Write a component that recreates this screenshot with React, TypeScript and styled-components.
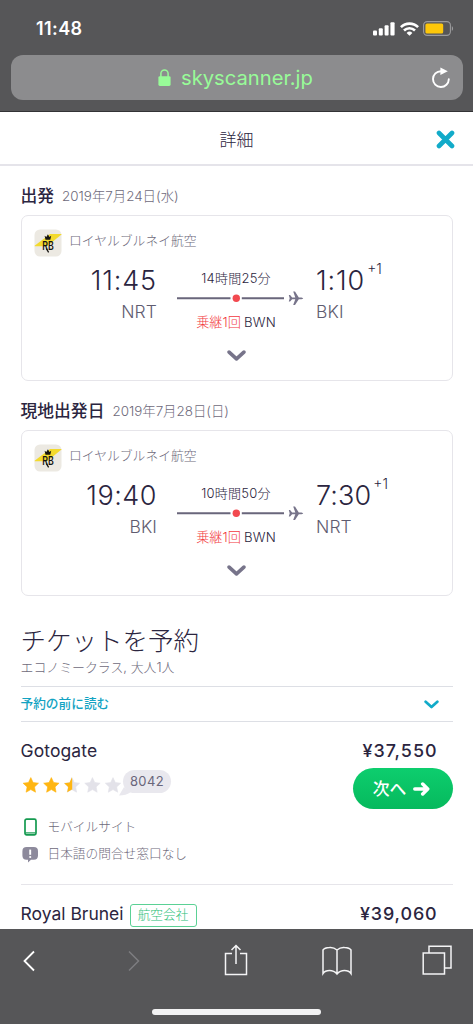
import React from "react";
import styled, { createGlobalStyle } from "styled-components";

const Global = createGlobalStyle`
  * { box-sizing: border-box; }
  html, body { margin: 0; padding: 0; background: #fff; }
  body { font-family: Inter, "Noto Sans CJK JP", sans-serif; color: #2b2540; }
`;

const Screen = styled.div`
  width: 473px;
  height: 1024px;
  overflow: hidden;
  display: flex;
  flex-direction: column;
  background: #fff;
`;

const Label = styled.span<{ $size: number; $weight?: number; $color?: string; $track?: number }>`
  font-size: ${(p) => p.$size}px;
  font-weight: ${(p) => p.$weight ?? 400};
  color: ${(p) => p.$color ?? "#2b2540"};
  letter-spacing: ${(p) => p.$track ?? 0}px;
  line-height: 1;
  white-space: nowrap;
`;

const BrowserHeader = styled.header`
  flex: none;
  height: 112px;
  background: #565658;
  border-bottom: 1px solid #333335;
`;

const StatusBar = styled.div`
  height: 55px;
  padding: 2px 19px 0 36px;
  display: flex;
  align-items: center;
  justify-content: space-between;
`;

const StatusIcons = styled.div`
  display: flex;
  align-items: center;
  gap: 4.5px;
`;

const AddressBar = styled.div`
  height: 45px;
  margin: 0 10.5px 0 11px;
  padding: 0 12px 0 147px;
  border-radius: 12px;
  background: #8c8c8e;
  display: flex;
  align-items: center;
`;

const Host = styled.div`
  flex: 1;
  padding: 2px 0 0 10px;
  display: flex;
`;

const TitleBar = styled.div`
  flex: none;
  height: 54px;
  padding: 0 18px 0 219.5px;
  border-bottom: 2px solid #e5e4ea;
  display: flex;
  align-items: center;
  justify-content: space-between;
  & > span { padding-top: 5px; }
  & > svg { margin-top: 2px; }
`;

const Content = styled.main`
  flex: none;
  height: 763px;
  overflow: hidden;
  padding: 0 20.5px;
`;

const LegHeading = styled.div`
  height: 49px;
  padding-top: 11px;
  display: flex;
  align-items: center;
  gap: 8px;
  & > span + span { padding-top: 1px; }
`;

const Card = styled.section`
  height: 166px;
  border: 1.5px solid #e6e5ea;
  border-radius: 7px;
  padding: 12.5px;
`;

const Airline = styled.div`
  height: 28px;
  display: flex;
  align-items: center;
  gap: 7px;
  & > span { margin-top: -3px; }
`;

const Route = styled.div`
  display: grid;
  grid-template-columns: 122px 21px 118px 21px 1fr;
  height: 70px;
`;

const Stop = styled.div<{ $align: "start" | "end" }>`
  grid-column: ${(p) => (p.$align === "end" ? 1 : 5)};
  padding-top: 10px;
  display: flex;
  flex-direction: column;
  align-items: flex-${(p) => p.$align};
  gap: 8.5px;
  ${(p) => p.$align === "end" && "margin-right: -1px;"}
`;

const Clock = styled.div`
  height: 28px;
  display: flex;
  align-items: flex-start;
  gap: 2px;
  & > span + span { margin-top: -5px; }
`;

const Middle = styled.div`
  grid-column: 3;
  padding-top: 15px;
  display: flex;
  flex-direction: column;
  align-items: center;
`;

const Transfer = styled.div`
  display: flex;
  gap: 3px;
  align-items: center;
`;

const Track = styled.svg`
  margin: 4px 0 9px 7px;
  display: block;
  flex: none;
`;

const Expand = styled.div`
  display: flex;
  justify-content: center;
  padding-top: 23.5px;
`;

const Booking = styled.div`
  height: 90px;
  padding-top: 32px;
  display: flex;
  flex-direction: column;
  gap: 8px;
`;

const ReadFirst = styled.div`
  height: 36px;
  border-top: 1px solid #dddfe5;
  border-bottom: 1px solid #dddfe5;
  padding: 1px 14px 0 0;
  display: flex;
  align-items: center;
  justify-content: space-between;
`;

const Offer = styled.article`
  height: 163px;
  padding-top: 15.5px;
  border-bottom: 1.5px solid #e6e5ea;
  display: flex;
  justify-content: space-between;
`;

const OfferInfo = styled.div`
  display: flex;
  flex-direction: column;
`;

const Rating = styled.div`
  display: flex;
  height: 41px;
  padding: 6.5px 0 0 1.5px;
`;

const Stars = styled.svg`
  margin-top: 8px;
  flex: none;
`;

const Reviews = styled.div`
  position: relative;
  width: 48px;
  height: 23px;
  border-radius: 12px;
  background: #e9e8ee;
  margin: 1px 0 0 0;
  display: flex;
  align-items: center;
  justify-content: center;
`;

const Tail = styled.svg`
  position: absolute;
  left: -4px;
  bottom: -3px;
`;

const Feature = styled.div`
  height: 27.5px;
  display: flex;
  align-items: center;
  gap: 8.5px;
  padding-left: 1px;
  & > svg { margin-left: -0.5px; }
`;

const Features = styled.div`
  padding-top: 10px;
`;

const PriceSide = styled.div`
  display: flex;
  flex-direction: column;
  align-items: flex-end;
  gap: 5.5px;
`;

const Price = styled(Label)`
  margin-right: 15px;
  height: 25px;
  line-height: 25px;
`;

const OfferName = styled(Label)`
  height: 25px;
  line-height: 25px;
`;

const Next = styled.button`
  width: 100px;
  height: 41px;
  border: 0;
  border-radius: 21px;
  padding: 0 2px 0 0;
  background: linear-gradient(#0dce6e, #06b95d);
  font-family: inherit;
  display: flex;
  align-items: center;
  justify-content: center;
  gap: 7px;
  & > span { padding-top: 2px; }
`;

const NextOffer = styled.div`
  height: 60px;
  padding-top: 15.5px;
  display: flex;
  justify-content: space-between;
`;

const Named = styled.div`
  display: flex;
  gap: 6px;
`;

const Badge = styled.div`
  width: 67px;
  height: 23px;
  margin-top: 3.5px;
  border: 1.5px solid #5bd195;
  border-radius: 3px;
  display: flex;
  align-items: center;
  justify-content: center;
`;

const Toolbar = styled.footer`
  flex: none;
  height: 95px;
  background: #565658;
  display: flex;
  flex-direction: column;
  align-items: center;
  justify-content: space-between;
  padding-bottom: 9px;
`;

const Tools = styled.div`
  width: 100%;
  height: 61px;
  padding: 3px 0 0 14px;
  display: grid;
  grid-template-columns: 105px 102px 100.5px 100px 30px;
  align-items: center;
`;

const Tool = styled.div<{ $lift?: boolean }>`
  width: 30px;
  display: flex;
  justify-content: center;
  ${(p) => p.$lift && "margin-top: -2px;"}
`;

const HomeIndicator = styled.div`
  width: 169px;
  height: 6px;
  border-radius: 3px;
  background: #f2f2f3;
`;

const Signal = () => (
  <svg width="22" height="14" viewBox="0 0 22 14" fill="#fff">
    <rect x="0" y="8.5" width="4" height="5" rx="1" />
    <rect x="5.8" y="6.3" width="4" height="7.2" rx="1" />
    <rect x="11.6" y="3.3" width="4" height="10.2" rx="1" />
    <rect x="17.4" y="0.2" width="4.2" height="13.3" rx="1" />
  </svg>
);

const Wifi = () => (
  <svg width="19" height="14" viewBox="0 0 19 14" fill="none" stroke="#fff" strokeWidth="2.6">
    <path d="M0.9 5.2a12.2 12.2 0 0 1 17.2 0" />
    <path d="M4 8.5a7.8 7.8 0 0 1 11 0" />
    <path d="M9.5 13.8L6.6 10.9a4.2 4.2 0 0 1 5.8 0z" fill="#fff" stroke="none" />
  </svg>
);

const Battery = () => (
  <svg width="31" height="15" viewBox="0 0 31 15">
    <rect x="0.6" y="0.6" width="26.8" height="13.8" rx="3.6" fill="none" stroke="#9b9b9d" strokeWidth="1.1" />
    <rect x="2.4" y="2.4" width="17.8" height="10.2" rx="1.6" fill="#fdc70a" />
    <path d="M28.8 5.2c1.7.6 1.7 4 0 4.6z" fill="#9b9b9d" />
  </svg>
);

const Lock = () => (
  <svg width="13" height="18" viewBox="0 0 13 18">
    <rect x="0.4" y="7.2" width="12.2" height="9.8" rx="1.4" fill="#98fb98" />
    <path d="M2.9 8V4.6a3.6 3.6 0 0 1 7.2 0V8" fill="none" stroke="#98fb98" strokeWidth="1.5" />
  </svg>
);

const Reload = () => (
  <svg width="20" height="22" viewBox="0 0 20 22">
    <path d="M17.8 12.2A7.9 7.9 0 1 1 10 4.2" fill="none" stroke="#fff" strokeWidth="1.9" strokeLinecap="round" />
    <path d="M9.4 0.4L16.8 4.2L9.4 8z" fill="#fff" />
  </svg>
);

const Close = () => (
  <svg width="19" height="19" viewBox="0 0 19 19">
    <path d="M3 3L16 16M16 3L3 16" stroke="#12abc9" strokeWidth="4.6" strokeLinecap="round" />
  </svg>
);

const AirlineLogo = () => (
  <svg width="28" height="28" viewBox="0 0 28 28">
    <rect x="0.5" y="0.5" width="27" height="27" rx="5.5" fill="#ece9e2" />
    <path d="M16 5H27.5V5.6L13 17.2H0.6V16.8z" fill="#f3da2d" />
    <path d="M10.6 6.8l1.8 1.2 1.5-2.7 1.5 2.7 1.8-1.2-.9 4h-4.8z" fill="#161411" />
    <text x="8.3" y="21" fontFamily="Inter, sans-serif" fontSize="11.5" fontWeight="600" textLength="11.5" lengthAdjust="spacingAndGlyphs" fill="#161411">RB</text>
    <path d="M12.3 19.5L14.6 23.3" stroke="#161411" strokeWidth="1.3" />
  </svg>
);

const Chevron = ({ w, color, stroke }: { w: number; color: string; stroke: number }) => (
  <svg width={w} height={w * 0.6} viewBox="0 0 20 12">
    <path d="M2.2 2.2L10 9.4L17.8 2.2" fill="none" stroke={color} strokeWidth={stroke} strokeLinecap="round" strokeLinejoin="round" />
  </svg>
);

const FlightTrack = () => (
  <Track width="128" height="18" viewBox="0 0 128 18">
    <path d="M1 9.3H54.5M65.800 9.3H108" stroke="#69667b" strokeWidth="1.9" />
    <circle cx="60.3" cy="9.3" r="3.7" fill="#f2494f" />
    <path transform="translate(0 .3)" d="M112.8 5.8h1.300l2 2.300h3.200L117.200 2.300h1.800l3.800 5.800h2.700q1.700.3 1.700.9t-1.700.9h-2.700l-3.800 5.800h-1.800l2.100-5.800h-3.200l-2 2.300h-1.300l.9-3.200z" fill="#77748a" />
  </Track>
);

const STAR = "M8 .6l2.3 4.9 5.4.7-4 3.7 1 5.3L8 12.6l-4.7 2.6 1-5.3-4-3.7 5.4-.7z";

const StarRow = () => (
  <Stars width="101" height="16" viewBox="0 0 101 16">
    <defs>
      <clipPath id="half"><rect width="8.3" height="16" /></clipPath>
    </defs>
    {[0, 1, 2, 3, 4].map((i) => (
      <g key={i} transform={`translate(${i * 20.55 + 0.8} 0)`}>
        <path d={STAR} fill={i < 2 ? "#ffb612" : "#e3e2e9"} stroke={i < 2 ? "#ffb612" : "#e3e2e9"} strokeWidth="0.6" strokeLinejoin="round" />
        {i === 2 && <path d={STAR} fill="#ffb612" clipPath="url(#half)" />}
      </g>
    ))}
  </Stars>
);

const Phone = () => (
  <svg width="18" height="18" viewBox="0 0 18 18">
    <rect x="4" y="1.2" width="11" height="15.6" rx="1.6" fill="none" stroke="#159a50" strokeWidth="1.7" />
    <path d="M4.5 14.9H14.5" stroke="#159a50" strokeWidth="1.2" />
  </svg>
);

const Notice = () => (
  <svg width="18" height="18" viewBox="0 0 18 18">
    <path d="M5.6 1h7.2Q17 1 17 5.2v4.4q0 4.2-4.2 4.2H10l-3 2.6v-2.6H5.6Q1.4 13.8 1.4 9.6V5.2Q1.4 1 5.6 1z" fill="#8d8a9c" />
    <path d="M9.2 3.6V8.8" stroke="#fff" strokeWidth="1.9" />
    <circle cx="9.2" cy="11" r="1.1" fill="#fff" />
  </svg>
);

const Arrow = () => (
  <svg width="17" height="14" viewBox="0 0 17 14" fill="none" stroke="#fff" strokeWidth="3.5" strokeLinecap="round" strokeLinejoin="round">
    <path d="M1.8 7H14M9.7 2L14.7 7L9.7 12" />
  </svg>
);

interface Leg {
  heading: string;
  date: string;
  from: string;
  to: string;
  depart: string;
  arrive: string;
  duration: string;
}

const LEGS: Leg[] = [
  { heading: "出発", date: "2019年7月24日(水)", from: "NRT", to: "BKI", depart: "11:45", arrive: "1:10", duration: "14時間25分" },
  { heading: "現地出発日", date: "2019年7月28日(日)", from: "BKI", to: "NRT", depart: "19:40", arrive: "7:30", duration: "10時間50分" },
];

// The digit 1 is narrow in Inter, so times with several of them are spaced a little wider.
const timeTrack = (time: string) => 0.1 + 0.4 * (time.split("1").length - 1);

const FlightLeg = ({ leg }: { leg: Leg }) => (
  <>
    <LegHeading>
      <Label $size={16.8} $weight={500}>{leg.heading}</Label>
      <Label $size={13.4} $weight={300} $color="#6e6a7b">{leg.date}</Label>
    </LegHeading>
    <Card>
      <Airline>
        <AirlineLogo />
        <Label $size={12.8} $weight={300} $color="#6e6a7b">ロイヤルブルネイ航空</Label>
      </Airline>
      <Route>
        <Stop $align="end">
          <Clock><Label $size={27} $weight={300} $track={timeTrack(leg.depart)}>{leg.depart}</Label></Clock>
          <Label $size={17.5} $weight={300} $color="#5f5c70" $track={0.1}>{leg.from}</Label>
        </Stop>
        <Middle>
          <Label $size={13} $weight={300} $track={0.25}>{leg.duration}</Label>
          <FlightTrack />
          <Transfer>
            <Label $size={13.2} $weight={300} $color="#f2393f">乗継1回</Label>
            <Label $size={13.2} $weight={300} $track={0.2}>BWN</Label>
          </Transfer>
        </Middle>
        <Stop $align="start">
          <Clock>
            <Label $size={27} $weight={300} $track={timeTrack(leg.arrive)}>{leg.arrive}</Label>
            <Label $size={14} $weight={300}>+1</Label>
          </Clock>
          <Label $size={17.5} $weight={300} $color="#5f5c70" $track={0.1}>{leg.to}</Label>
        </Stop>
      </Route>
      <Expand><Chevron w={19} color="#77748a" stroke={3.8} /></Expand>
    </Card>
  </>
);

export default function App() {
  return (
    <Screen>
      <Global />
      <BrowserHeader>
        <StatusBar>
          <Label $size={18} $weight={600} $color="#fff" $track={0.4}>11:48</Label>
          <StatusIcons><Signal /><Wifi /><Battery /></StatusIcons>
        </StatusBar>
        <AddressBar>
          <Lock />
          <Host><Label $size={20.2} $color="#98fb98">skyscanner.jp</Label></Host>
          <Reload />
        </AddressBar>
      </BrowserHeader>
      <TitleBar>
        <Label $size={17} $weight={300}>詳細</Label>
        <Close />
      </TitleBar>
      <Content>
        {LEGS.map((leg) => <FlightLeg key={leg.heading} leg={leg} />)}
        <Booking>
          <Label $size={25.5} $weight={300}>チケットを予約</Label>
          <Label $size={12.9} $weight={300} $color="#6e6a7b">エコノミークラス, 大人1人</Label>
        </Booking>
        <ReadFirst>
          <Label $size={12.7} $weight={500} $color="#12a3c2">予約の前に読む</Label>
          <Chevron w={15} color="#12abc9" stroke={3.6} />
        </ReadFirst>
        <Offer>
          <OfferInfo>
            <OfferName $size={17.5} $track={0.1}>Gotogate</OfferName>
            <Rating>
              <StarRow />
              <Reviews>
                <Tail width="12" height="9" viewBox="0 0 12 9"><path d="M5 0L0 8.5Q7 8.5 12 5z" fill="#e9e8ee" /></Tail>
                <Label $size={13} $color="#69667b" $track={0.4}>8042</Label>
              </Reviews>
            </Rating>
            <Features>
              <Feature><Phone /><Label $size={12.7} $weight={300} $color="#6e6a7b">モバイルサイト</Label></Feature>
              <Feature><Notice /><Label $size={12.7} $weight={300} $color="#6e6a7b">日本語の問合せ窓口なし</Label></Feature>
            </Features>
          </OfferInfo>
          <PriceSide>
            <Price $size={17.9} $weight={500} $track={1}>¥37,550</Price>
            <Next>
              <Label $size={16.8} $weight={500} $color="#fff">次へ</Label>
              <Arrow />
            </Next>
          </PriceSide>
        </Offer>
        <NextOffer>
          <Named>
            <OfferName $size={17.5}>Royal Brunei</OfferName>
            <Badge><Label $size={12.7} $weight={300} $color="#2cc078">航空会社</Label></Badge>
          </Named>
          <Price $size={17.9} $weight={500} $track={0.9}>¥39,060</Price>
        </NextOffer>
      </Content>
      <Toolbar>
        <Tools>
          <Tool><svg width="14" height="24" viewBox="0 0 14 24" fill="none" stroke="#fff" strokeWidth="1.8"><path d="M12 2.5L2.5 12L12 21.5" /></svg></Tool>
          <Tool><svg width="14" height="24" viewBox="0 0 14 24" fill="none" stroke="#7d7d80" strokeWidth="1.5"><path d="M2 2.5L11.5 12L2 21.5" /></svg></Tool>
          <Tool $lift><svg width="24" height="32" viewBox="0 0 24 32" fill="none" stroke="#f4f4f5" strokeWidth="1.5"><path d="M8 9.5H1.5V30.5H22.5V9.5H16M12 20V1.5M7.5 6L12 1.5L16.5 6" /></svg></Tool>
          <Tool><svg width="30" height="30" viewBox="0 0 30 30" fill="none" stroke="#f4f4f5" strokeWidth="1.5"><path d="M15 4Q11.5 1 7.5 1.5Q2.5 1.8 1 4V27.5Q3 24.5 7.5 24.5Q12 24.5 15 28Q18 24.5 22.5 24.5Q27 24.5 29 27.5V4Q27.5 1.8 22.5 1.5Q18.5 1 15 4V28" /></svg></Tool>
          <Tool $lift><svg width="30" height="30" viewBox="0 0 30 30" fill="none" stroke="#f4f4f5" strokeWidth="1.5"><path d="M1.2 8H22.5V29H1.2zM7 8V1.2H29V23H22.5" /></svg></Tool>
        </Tools>
        <HomeIndicator />
      </Toolbar>
    </Screen>
  );
}
